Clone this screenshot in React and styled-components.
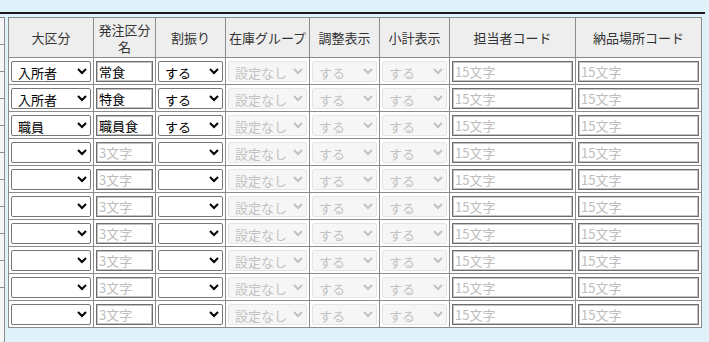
import styled, { createGlobalStyle } from "styled-components";

const GlobalStyle = createGlobalStyle`
  html, body {
    margin: 0;
    padding: 0;
    background: #dff2fa;
    font-family: "Noto Sans CJK JP", "Noto Sans", sans-serif;
    font-size: 13px;
    color: #222;
  }
`;

const Page = styled.div`
  padding-top: 12px;
  width: 709px;
  height: 342px;
  overflow: hidden;
  box-sizing: border-box;
`;

const TopRule = styled.div`
  width: 705px;
  height: 2px;
  background: #1c1c1c;
`;

const Body = styled.div`
  display: flex;
  align-items: flex-start;
  margin-top: 3px;
`;

const SidePanel = styled.div`
  width: 4px;
  height: 330px;
  background: #f6f6f6;
  border-right: 1px solid #8c8c8c;
  border-top: 1px solid #8c8c8c;
  box-sizing: content-box;
  padding-top: 26px;
`;

const SideLine = styled.div`
  height: 26px;
  border-top: 1px solid #8c8c8c;
`;

const Table = styled.table`
  margin-left: 3px;
  border-collapse: collapse;
  table-layout: fixed;
  width: 694px;
  border: 1px solid #8c8c8c;
  background: #fff;
`;

const Th = styled.th`
  height: 39px;
  padding: 0 2px;
  background: #eeeeee;
  border: 1px solid #8c8c8c;
  font-weight: 400;
  font-size: 13px;
  line-height: 17px;
  color: #333;
  text-align: center;
  vertical-align: middle;
`;

const Td = styled.td`
  height: 27px;
  padding: 0 2px;
  border: 1px solid #8c8c8c;
  vertical-align: middle;
  box-sizing: border-box;
`;

const Select = styled.select`
  display: block;
  width: 100%;
  height: 21px;
  margin: 0;
  padding: 0 0 0 2px;
  font-family: "Noto Sans CJK JP", sans-serif;
  font-size: 13px;
  color: #000;
  background: #fff;
  border: 1px solid #767676;
  border-radius: 2px;
  box-sizing: border-box;

  &:disabled {
    color: #a8a8a8;
    background: #f3f3f3;
    border-color: #dadada;
  }
`;

const TextInput = styled.input`
  display: block;
  width: 100%;
  height: 21px;
  margin: 0;
  padding: 0 2px;
  font-family: "Noto Sans CJK JP", sans-serif;
  font-size: 13px;
  color: #000;
  background: #fff;
  border: 1px solid #6e6e6e;
  box-shadow: inset 0 0 0 1px #c4c4c4;
  box-sizing: border-box;
  outline: none;

  &::placeholder {
    color: #bdbdbd;
  }
`;

const widths = [85, 62, 70, 84, 70, 70, 126, 126];
const headers = ["大区分", "発注区分名", "割振り", "在庫グループ", "調整表示", "小計表示", "担当者コード", "納品場所コード"];

const rows = [
  { kubun: "入所者", name: "常食", wari: "する" },
  { kubun: "入所者", name: "特食", wari: "する" },
  { kubun: "職員", name: "職員食", wari: "する" },
  {}, {}, {}, {}, {}, {}, {},
];

function Row({ kubun = "", name = "", wari = "" }) {
  return (
    <tr>
      <Td>
        <Select defaultValue={kubun}>
          <option value=""></option>
          <option value="入所者">入所者</option>
          <option value="職員">職員</option>
        </Select>
      </Td>
      <Td>
        <TextInput defaultValue={name} placeholder="3文字" />
      </Td>
      <Td>
        <Select defaultValue={wari}>
          <option value=""></option>
          <option value="する">する</option>
          <option value="しない">しない</option>
        </Select>
      </Td>
      <Td>
        <Select disabled defaultValue="設定なし">
          <option>設定なし</option>
        </Select>
      </Td>
      <Td>
        <Select disabled defaultValue="する">
          <option>する</option>
        </Select>
      </Td>
      <Td>
        <Select disabled defaultValue="する">
          <option>する</option>
        </Select>
      </Td>
      <Td>
        <TextInput placeholder="15文字" />
      </Td>
      <Td>
        <TextInput placeholder="15文字" />
      </Td>
    </tr>
  );
}

export default function App() {
  return (
    <>
      <GlobalStyle />
      <Page>
        <TopRule />
        <Body>
          <SidePanel>
            {rows.map((_, i) => (
              <SideLine key={i} />
            ))}
          </SidePanel>
          <Table>
            <colgroup>
              {widths.map((w, i) => (
                <col key={i} style={{ width: w }} />
              ))}
            </colgroup>
            <thead>
              <tr>
                {headers.map((h) => (
                  <Th key={h}>{h}</Th>
                ))}
              </tr>
            </thead>
            <tbody>
              {rows.map((r, i) => (
                <Row key={i} {...r} />
              ))}
            </tbody>
          </Table>
        </Body>
      </Page>
    </>
  );
}
